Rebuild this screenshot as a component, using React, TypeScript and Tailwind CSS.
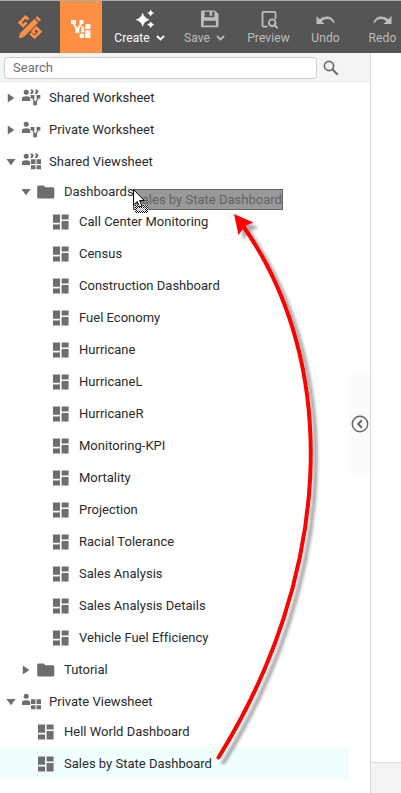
import type { ReactNode } from "react";

type Kind = "sharedWs" | "privateWs" | "sharedVs" | "privateVs" | "folder" | "sheet";

interface TreeNode {
  label: string;
  kind: Kind;
  open?: boolean;
  selected?: boolean;
  children?: TreeNode[];
}

const sheet = (label: string, selected = false): TreeNode => ({ label, kind: "sheet", selected });

const tree: TreeNode[] = [
  { label: "Shared Worksheet", kind: "sharedWs", children: [] },
  { label: "Private Worksheet", kind: "privateWs", children: [] },
  {
    label: "Shared Viewsheet",
    kind: "sharedVs",
    open: true,
    children: [
      {
        label: "Dashboards",
        kind: "folder",
        open: true,
        children: [
          sheet("Call Center Monitoring"),
          sheet("Census"),
          sheet("Construction Dashboard"),
          sheet("Fuel Economy"),
          sheet("Hurricane"),
          sheet("HurricaneL"),
          sheet("HurricaneR"),
          sheet("Monitoring-KPI"),
          sheet("Mortality"),
          sheet("Projection"),
          sheet("Racial Tolerance"),
          sheet("Sales Analysis"),
          sheet("Sales Analysis Details"),
          sheet("Vehicle Fuel Efficiency"),
        ],
      },
      { label: "Tutorial", kind: "folder", children: [] },
    ],
  },
  {
    label: "Private Viewsheet",
    kind: "privateVs",
    open: true,
    children: [sheet("Hell World Dashboard"), sheet("Sales by State Dashboard", true)],
  },
];

const Person = () => (
  <>
    <circle cx="4.2" cy="3.2" r="2.5" />
    <path d="M0 12V9.5Q0 7.2 4.2 7.2T8.2 9.5V12Z" />
  </>
);

const Others = () => (
  <path d="M8.2 .4h2.2l1.5 2.2-1.5 2.4H8.2l1.2-2.4ZM12.8 .4H15l1.6 2.2L15 5h-2.2L14 2.6Z" />
);

const Graph = () => (
  <>
    <path d="M10.5 8.5 13.2 14.2 16.6 8.5" fill="none" stroke="currentColor" strokeWidth="1.3" />
    <path d="M8.6 6h3.8v3.6H8.6ZM14.5 6h3.8v3.6h-3.8ZM11.2 12.6h3.8v3.6h-3.8Z" />
  </>
);

const Blocks = () => (
  <path d="M9 6.2h4.5v4.8H9ZM14.6 6.2H19v4.8h-4.4ZM9 12.2h4.5v4H9ZM14.6 12.2H19v4h-4.4Z" />
);

function NodeIcon({ kind }: { kind: Kind }) {
  if (kind === "folder") {
    return (
      <svg className="h-[14px] w-[18px] shrink-0" viewBox="0 0 18 14" fill="currentColor">
        <path d="M1.6.5h5l1.8 1.8h7.4Q17.3 2.3 17.3 3.8v8.2q0 1.5-1.5 1.5H1.6Q.2 13.5.2 12V2Q.2.5 1.6.5Z" />
      </svg>
    );
  }
  if (kind === "sheet") {
    return (
      <svg className="h-4 w-4 shrink-0" viewBox="0 0 16 16" fill="currentColor">
        <path d="M0 .5h7v8.3H0ZM8.6.5h7v4.9h-7ZM0 10.4h7v5H0ZM8.6 7h7v8.4h-7Z" />
      </svg>
    );
  }
  return (
    <svg className="h-[17px] w-[19px] shrink-0" viewBox="0 0 19 17" fill="currentColor">
      <Person />
      {(kind === "sharedWs" || kind === "sharedVs") && <Others />}
      {kind === "sharedWs" || kind === "privateWs" ? <Graph /> : <Blocks />}
    </svg>
  );
}

function Caret({ open }: { open?: boolean }) {
  return (
    <svg className="h-[10px] w-[10px] shrink-0" viewBox="0 0 10 10" fill="currentColor">
      {open ? <path d="M.4 2h9.2L5 8.3Z" /> : <path d="M1.8.4 8.4 5 1.8 9.6Z" />}
    </svg>
  );
}

const pads = ["pl-[6px]", "pl-[21px]", "pl-[36px]"];

function Branch({ nodes, depth }: { nodes: TreeNode[]; depth: number }) {
  return (
    <ul className="-mt-[2px]">
      {nodes.map((n) => (
        <li key={n.label}>
          <div
            className={`flex h-8 w-[349px] items-center pt-px ${pads[depth]} ${n.selected ? "bg-[#f0fefe]" : ""}`}
          >
            <span className="flex w-4 shrink-0 items-center text-[#6d6d6d]">
              {n.children && <Caret open={n.open} />}
            </span>
            <span
              className={`flex shrink-0 items-center text-[#6d6d6d] ${n.kind === "sheet" ? "w-[26px] pl-px" : "w-[27px]"}`}
            >
              <NodeIcon kind={n.kind} />
            </span>
            <span className={n.kind === "sheet" ? "pl-px" : ""}>{n.label}</span>
          </div>
          {n.open && n.children && <Branch nodes={n.children} depth={depth + 1} />}
        </li>
      ))}
    </ul>
  );
}

function Chevron() {
  return (
    <svg className="h-[6px] w-[9px]" viewBox="0 0 9 6" fill="none" stroke="currentColor" strokeWidth="1.8">
      <path d="m1 1 3.500 3.500L8 1" />
    </svg>
  );
}

function Tool({ label, width, icon, menu, bright }: {
  label: string;
  width: string;
  icon: ReactNode;
  menu?: boolean;
  bright?: boolean;
}) {
  return (
    <button
      className={`flex shrink-0 flex-col items-center pt-[7px] ${width} ${bright ? "text-white" : "text-[#bdbdbd]"}`}
    >
      <span className="flex h-[22px] items-center">{icon}</span>
      <span className="flex items-center gap-[6px] text-[12px] leading-4 tracking-[0.1px]">
        {label}
        {menu && <Chevron />}
      </span>
    </button>
  );
}

function Toolbar() {
  return (
    <header className="flex h-[53px] shrink-0 overflow-hidden border-t border-[#a9adab] bg-[#555555]">
      <div className="flex w-[60px] shrink-0 items-center justify-center text-[#ff8f43]">
        <svg className="h-6 w-6" viewBox="0 0 24 24" fill="none" stroke="currentColor">
          <path d="M10.5 4.5 7.5 1.8 1.8 7.5 5.2 10.8 8.6 7.4" strokeWidth="2.7" />
          <path d="m12.3 18.2 4.2 4.2 5.7-5.7-4.1-4.2-3.4 3.6 2.4 2.3" strokeWidth="2.7" />
          <path d="M2.8 21.2 21.2 2.8" stroke="#555555" strokeWidth="7" />
          <path d="M4 20 18.4 5.6M19.3 4.7l1.8-1.8" strokeWidth="5.4" />
          <path d="M.8 23.2 2 17.9 6 22Z" fill="currentColor" stroke="none" />
        </svg>
      </div>
      <div className="flex w-[42px] shrink-0 items-center justify-center bg-[#ff8f43] text-white">
        <svg className="mt-[3px] h-[20px] w-[20px]" viewBox="0 0 20 20" fill="currentColor">
          <path d="M0 1h5v4H0ZM8.5 1h4v4h-4ZM4.3 9.8h4v4h-4ZM14.2 5h5.3v5h-5.3ZM14.2 11.2h5.3V19h-5.3ZM8.7 14.8h4.4V19H8.7ZM10.5 7.5h2.6v6h-3Z" />
          <path d="M2.8 4.8 6.4 11 10.6 4" fill="none" stroke="currentColor" strokeWidth="2" />
        </svg>
      </div>
      <Tool
        label="Create"
        width="w-[75px]"
        menu
        bright
        icon={
          <svg className="ml-[11px] h-5 w-5" viewBox="0 0 20 20" fill="currentColor">
            <path d="M7.700 3.600Q8.900 9.200 14.900 10.800 8.900 12 7.700 18 6.300 12 .5 10.800 6.300 9.200 7.700 3.600ZM15.700.6q.6 2.700 3.500 3.500-2.900.7-3.500 3.500-.8-2.800-3.500-3.500Q14.900 3.300 15.700.6ZM15.700 12.200q.6 2.700 3.500 3.500-2.900.7-3.500 3.500-.8-2.800-3.500-3.500 2.700-.8 3.500-3.500Z" />
          </svg>
        }
      />
      <Tool
        label="Save"
        width="w-[55px]"
        menu
        icon={
          <svg className="ml-[11px] h-[18px] w-[18px]" viewBox="0 0 18 18" fill="currentColor" fillRule="evenodd">
            <path d="M0 1.800Q0 .5 1.300.5h12.700L17.500 4v12q0 1.300-1.300 1.300H1.300Q0 17.300 0 16ZM3.600 1.800v5.400h9.800V1.800h-2.200v4H8.600v-4ZM2.700 10.700v4.700h12.200v-4.700Z" />
          </svg>
        }
      />
      <Tool
        label="Preview"
        width="w-[73px]"
        icon={
          <svg className="ml-[2px] h-[19px] w-[18px]" viewBox="0 0 18 19" fill="none" stroke="currentColor">
            <path d="M6.500 16.700H2.600q-1.100 0-1.100-1.100V3q0-1.100 1.100-1.100h10.800q1.100 0 1.100 1.100v6" strokeWidth="1.800" />
            <circle cx="11.200" cy="12.700" r="3.300" strokeWidth="1.900" />
            <path d="m13.500 15 3 3.300" strokeWidth="2" />
          </svg>
        }
      />
      <Tool
        label="Undo"
        width="w-[41px]"
        icon={
          <svg className="mt-[2px] h-[10px] w-[19px]" viewBox="0 0 19 10" fill="currentColor">
            <path d="M.5 1v8h8L5.700 6.200Q7.700 4.100 11 4.100q4.500 0 6.200 4l1.500-.7Q16.300 1.600 11 1.600q-4.700 0-7.300 2.600Z" />
          </svg>
        }
      />
      <Tool
        label="Redo"
        width="w-[73px]"
        icon={
          <svg className="mt-[2px] h-[10px] w-[19px]" viewBox="0 0 19 10" fill="currentColor">
            <path d="M18.500 1v8h-8l2.800-2.800Q11.300 4.100 8 4.100q-4.500 0-6.200 4L.3 7.400Q2.700 1.600 8 1.600q4.700 0 7.300 2.600Z" />
          </svg>
        }
      />
    </header>
  );
}

function DragGhost() {
  return (
    <>
      <div className="absolute top-[189px] left-[133px] flex h-[21px] w-[150px] items-center border border-[#626262] bg-[#999999] whitespace-nowrap text-[#636363]">
        Sales by State Dashboard
      </div>
      <svg className="absolute top-[189px] left-[133px] h-[26px] w-4" viewBox="0 0 16 26">
        <defs>
          <pattern id="dither" width="2" height="2" patternUnits="userSpaceOnUse">
            <path d="M0 0h2v2H0Z" fill="white" />
            <path d="M0 0h1v1H0ZM1 1h1v1H1Z" fill="black" />
          </pattern>
        </defs>
        <path d="M.5.5v15.500l3.700-3.500 2.300 5.600 2.500-1-2.300-5.500h4.600Z" fill="white" stroke="black" strokeWidth="1" />
        <path d="M2 16h4v2h4v-2h5v8H2Z" fill="url(#dither)" />
        <path d="M4 19h8v3H4Z" fill="white" />
        <path d="M4 19h8v3H4Z" fill="url(#dither)" opacity=".35" />
      </svg>
    </>
  );
}

function MoveArrow() {
  return (
    <svg className="pointer-events-none absolute top-0 left-0 h-[793px] w-[401px]" viewBox="0 0 401 793">
      <defs>
        <filter id="shade" x="-10%" y="-5%" width="130%" height="110%">
          <feDropShadow dx="5" dy="5" stdDeviation="1.500" floodColor="#000000" floodOpacity=".34" />
        </filter>
      </defs>
      <g filter="url(#shade)">
        <path
          d="M218.500 757.500C330 578 344 367 241 223"
          fill="none"
          stroke="#ff0000"
          strokeWidth="4"
          strokeLinecap="round"
        />
        <path d="M234 214 253.500 222.500 245 226 238.500 235Z" fill="#ff0000" />
      </g>
    </svg>
  );
}

export default function App() {
  return (
    <div className="relative flex h-[793px] w-[401px] flex-col overflow-hidden bg-white font-[family-name:Roboto,sans-serif] text-[13px] leading-5 tracking-[0.01px] text-[#292b2c]">
      <Toolbar />
      <main className="flex min-h-0 flex-1">
        <aside className="flex w-[371px] shrink-0 border-r border-[#dcdcdc]">
          <div className="flex w-full flex-col">
            <div className="flex h-[30px] shrink-0 items-center bg-[#f4f4f4] pl-1">
              <div className="flex h-[22px] w-[313px] items-center rounded border border-[#c9ced8] bg-white pl-2 text-[#6b7075]">
                Search
              </div>
              <svg className="ml-[6px] h-4 w-4" viewBox="0 0 16 16" fill="none" stroke="#6a6a6a">
                <circle cx="6" cy="6" r="4.600" strokeWidth="1.700" />
                <path d="m9.300 9.300 5.500 5.500" strokeWidth="2" />
              </svg>
            </div>
            <div className="flex">
              <nav className="w-[349px] shrink-0">
                <Branch nodes={tree} depth={0} />
              </nav>
              <div className="mt-[291px] flex h-[100px] w-[21px] items-center justify-center rounded-l bg-[#fbfbfb]">
                <svg className="h-[18px] w-[18px]" viewBox="0 0 18 18" fill="none" stroke="#666666">
                  <circle cx="9" cy="9" r="7.700" strokeWidth="1.500" />
                  <path d="M10.800 5.200 7.200 9l3.600 3.800" strokeWidth="2" />
                </svg>
              </div>
            </div>
          </div>
        </aside>
        <section className="flex flex-1 flex-col justify-end">
          <div className="h-[31px] border-t border-[#dcdcdc] bg-[#f4f4f4]" />
        </section>
      </main>
      <DragGhost />
      <MoveArrow />
    </div>
  );
}
